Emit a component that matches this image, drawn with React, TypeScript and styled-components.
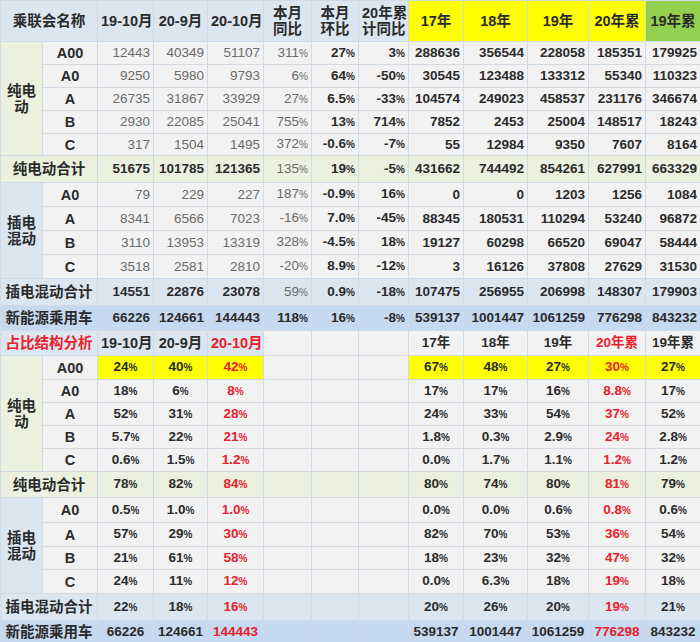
import React from "react";
import styled, { createGlobalStyle } from "styled-components";

const Global = createGlobalStyle`
  body { margin: 0; background: #fff; font-family: "Liberation Sans", "Noto Sans CJK SC", sans-serif; }
`;

const Table = styled.table`
  width: 700px;
  border-collapse: collapse;
  table-layout: fixed;
  font-size: 13px;
`;

type Kind = "g" | "b" | "r" | "n" | "h" | "hr";
const colors: Record<Kind, string> = { g: "#6b6b6b", b: "#2b2b2b", r: "#e8212a", n: "#333", h: "#2b2b2b", hr: "#e8212a" };

const Cell = styled.td<{ $bg: string; $k: Kind; $align: string }>`
  background: ${(p) => p.$bg};
  color: ${(p) => colors[p.$k]};
  font-weight: ${(p) => (p.$k === "g" || p.$k === "n" ? 400 : 700)};
  text-align: ${(p) => p.$align};
  padding: 0 3px;
  border: 1px solid #d3dae3;
  white-space: nowrap;
  line-height: 16px;
  overflow: hidden;
  font-size: ${(p) => (p.$k === "h" || p.$k === "hr" ? "14.5px" : "13.5px")};
`;

const Row = styled.tr<{ $h: number }>`
  height: ${(p) => p.$h}px;
`;

const Pc = styled.span`
  font-size: 10px;
`;

const GREY = "#f2f2f2";
const GREEN = "#ebf1de";
const BLUE = "#dce6f1";
const DBLUE = "#c5d9f1";
const YEL = "#ffff00";
const LGREEN = "#92d050";

type C = { t: string; k: Kind; bg?: string; cs?: number; rs?: number; a?: string };

const widths = [42, 55, 56, 54, 56, 48, 47, 50, 55, 64, 61, 57, 55];

const fmt = (t: string) => {
  if (t.endsWith("%")) return <>{t.slice(0, -1)}<Pc>%</Pc></>;
  if (t.includes("\n")) {
    const [a, b] = t.split("\n");
    return <>{a}<br />{b}</>;
  }
  return t;
};

const rows: { h: number; bg: string; cells: C[] }[] = [
  {
    h: 41, bg: BLUE, cells: [
      { t: "乘联会名称", k: "h", cs: 2, a: "center" },
      { t: "19-10月", k: "h", a: "center" },
      { t: "20-9月", k: "h", a: "center" },
      { t: "20-10月", k: "h", a: "center" },
      { t: "本月\n同比", k: "h", a: "center" },
      { t: "本月\n环比", k: "h", a: "center" },
      { t: "20年累\n计同比", k: "h", a: "center" },
      { t: "17年", k: "h", a: "center", bg: YEL },
      { t: "18年", k: "h", a: "center", bg: YEL },
      { t: "19年", k: "h", a: "center", bg: YEL },
      { t: "20年累", k: "h", a: "center", bg: YEL },
      { t: "19年累", k: "h", a: "center", bg: LGREEN },
    ],
  },
];

const evTop = [
  ["A00", "12443", "40349", "51107", "311%", "27%", "3%", "288636", "356544", "228058", "185351", "179925"],
  ["A0", "9250", "5980", "9793", "6%", "64%", "-50%", "30545", "123488", "133312", "55340", "110323"],
  ["A", "26735", "31867", "33929", "27%", "6.5%", "-33%", "104574", "249023", "458537", "231176", "346674"],
  ["B", "2930", "22085", "25041", "755%", "13%", "714%", "7852", "2453", "25004", "148517", "18243"],
  ["C", "317", "1504", "1495", "372%", "-0.6%", "-7%", "55", "12984", "9350", "7607", "8164"],
];
const phTop = [
  ["A0", "79", "229", "227", "187%", "-0.9%", "16%", "0", "0", "1203", "1256", "1084"],
  ["A", "8341", "6566", "7023", "-16%", "7.0%", "-45%", "88345", "180531", "110294", "53240", "96872"],
  ["B", "3110", "13953", "13319", "328%", "-4.5%", "18%", "19127", "60298", "66520", "69047", "58444"],
  ["C", "3518", "2581", "2810", "-20%", "8.9%", "-12%", "3", "16126", "37808", "27629", "31530"],
];

const mkTop = (data: string[][], group: string, gbg: string, heights: number[]) =>
  data.forEach((r, i) => {
    const left: C[] = [];
    if (i === 0) left.push({ t: group, k: "h", rs: data.length, bg: gbg, a: "center" });
    left.push({ t: r[0], k: "h", a: "center" });
    const cells: C[] = [...left, ...r.slice(1).map((t, j): C => ({ t, a: "right", k: j < 4 ? "g" : "b" }))];
    rows.push({ h: heights[i], bg: GREY, cells });
  });

mkTop(evTop, "纯电\n动", GREEN, [23, 23, 23, 23, 22]);
rows.push({
  h: 27, bg: GREEN, cells: [
    { t: "纯电动合计", k: "h", cs: 2, a: "center" },
    ...["51675", "101785", "121365"].map((t): C => ({ t, k: "b", a: "right" })),
    { t: "135%", k: "g", a: "right" },
    ...["19%", "-5%", "431662", "744492", "854261", "627991", "663329"].map((t): C => ({ t, k: "b", a: "right" })),
  ],
});
mkTop(phTop, "插电\n混动", BLUE, [24, 24, 24, 24]);
rows.push({
  h: 27, bg: BLUE, cells: [
    { t: "插电混动合计", k: "h", cs: 2, a: "center" },
    ...["14551", "22876", "23078"].map((t): C => ({ t, k: "b", a: "right" })),
    { t: "59%", k: "g", a: "right" },
    ...["0.9%", "-18%", "107475", "256955", "206998", "148307", "179903"].map((t): C => ({ t, k: "b", a: "right" })),
  ],
});
rows.push({
  h: 25, bg: DBLUE, cells: [
    { t: "新能源乘用车", k: "h", cs: 2, a: "center" },
    ...["66226", "124661", "144443", "118%", "16%", "-8%", "539137", "1001447", "1061259", "776298", "843232"].map(
      (t): C => ({ t, k: "b", a: "right" })
    ),
  ],
});
rows.push({
  h: 25, bg: GREY, cells: [
    { t: "占比结构分析", k: "hr", cs: 2, a: "center", bg: BLUE },
    { t: "19-10月", k: "h", a: "center", bg: BLUE },
    { t: "20-9月", k: "h", a: "center", bg: BLUE },
    { t: "20-10月", k: "hr", a: "center", bg: BLUE },
    { t: "", k: "n" }, { t: "", k: "n" }, { t: "", k: "n" },
    { t: "17年", k: "b", a: "center" },
    { t: "18年", k: "b", a: "center" },
    { t: "19年", k: "b", a: "center" },
    { t: "20年累", k: "r", a: "center" },
    { t: "19年累", k: "b", a: "center" },
  ],
});

const evBot = [
  ["A00", "24%", "40%", "42%", "67%", "48%", "27%", "30%", "27%"],
  ["A0", "18%", "6%", "8%", "17%", "17%", "16%", "8.8%", "17%"],
  ["A", "52%", "31%", "28%", "24%", "33%", "54%", "37%", "52%"],
  ["B", "5.7%", "22%", "21%", "1.8%", "0.3%", "2.9%", "24%", "2.8%"],
  ["C", "0.6%", "1.5%", "1.2%", "0.0%", "1.7%", "1.1%", "1.2%", "1.2%"],
];
const phBot = [
  ["A0", "0.5%", "1.0%", "1.0%", "0.0%", "0.0%", "0.6%", "0.8%", "0.6%"],
  ["A", "57%", "29%", "30%", "82%", "70%", "53%", "36%", "54%"],
  ["B", "21%", "61%", "58%", "18%", "23%", "32%", "47%", "32%"],
  ["C", "24%", "11%", "12%", "0.0%", "6.3%", "18%", "19%", "18%"],
];

const botCells = (v: string[], yellow = false): C[] => {
  const y = yellow ? YEL : undefined;
  return [
    { t: v[0], k: "b", a: "center", bg: y },
    { t: v[1], k: "b", a: "center", bg: y },
    { t: v[2], k: "r", a: "center", bg: y },
    { t: "", k: "n" }, { t: "", k: "n" }, { t: "", k: "n" },
    { t: v[3], k: "b", a: "center", bg: y },
    { t: v[4], k: "b", a: "center", bg: y },
    { t: v[5], k: "b", a: "center", bg: y },
    { t: v[6], k: "r", a: "center", bg: y },
    { t: v[7], k: "b", a: "center", bg: y },
  ];
};

const mkBot = (data: string[][], group: string, gbg: string, heights: number[], yellowFirst: boolean) =>
  data.forEach((r, i) => {
    const left: C[] = [];
    if (i === 0) left.push({ t: group, k: "h", rs: data.length, bg: gbg, a: "center" });
    left.push({ t: r[0], k: "h", a: "center" });
    rows.push({ h: heights[i], bg: GREY, cells: [...left, ...botCells(r.slice(1), yellowFirst && i === 0)] });
  });

mkBot(evBot, "纯电\n动", GREEN, [24, 23, 23, 23, 23], true);
rows.push({
  h: 26, bg: GREEN, cells: [
    { t: "纯电动合计", k: "h", cs: 2, a: "center" },
    ...botCells(["78%", "82%", "84%", "80%", "74%", "80%", "81%", "79%"]),
  ],
});
mkBot(phBot, "插电\n混动", BLUE, [25, 24, 23, 24], false);
rows.push({
  h: 27, bg: BLUE, cells: [
    { t: "插电混动合计", k: "h", cs: 2, a: "center" },
    ...botCells(["22%", "18%", "16%", "20%", "26%", "20%", "19%", "21%"]),
  ],
});
rows.push({
  h: 23, bg: DBLUE, cells: [
    { t: "新能源乘用车", k: "h", cs: 2, a: "center" },
    ...botCells(["66226", "124661", "144443", "539137", "1001447", "1061259", "776298", "843232"]),
  ],
});

export default function App() {
  return (
    <>
      <Global />
      <Table>
        <colgroup>
          {widths.map((w, i) => (
            <col key={i} style={{ width: w }} />
          ))}
        </colgroup>
        <tbody>
          {rows.map((r, i) => (
            <Row key={i} $h={r.h}>
              {r.cells.map((c, j) => (
                <Cell
                  key={j}
                  colSpan={c.cs}
                  rowSpan={c.rs}
                  $bg={c.bg ?? r.bg}
                  $k={c.k}
                  $align={c.a ?? "right"}
                >
                  {fmt(c.t)}
                </Cell>
              ))}
            </Row>
          ))}
        </tbody>
      </Table>
    </>
  );
}
